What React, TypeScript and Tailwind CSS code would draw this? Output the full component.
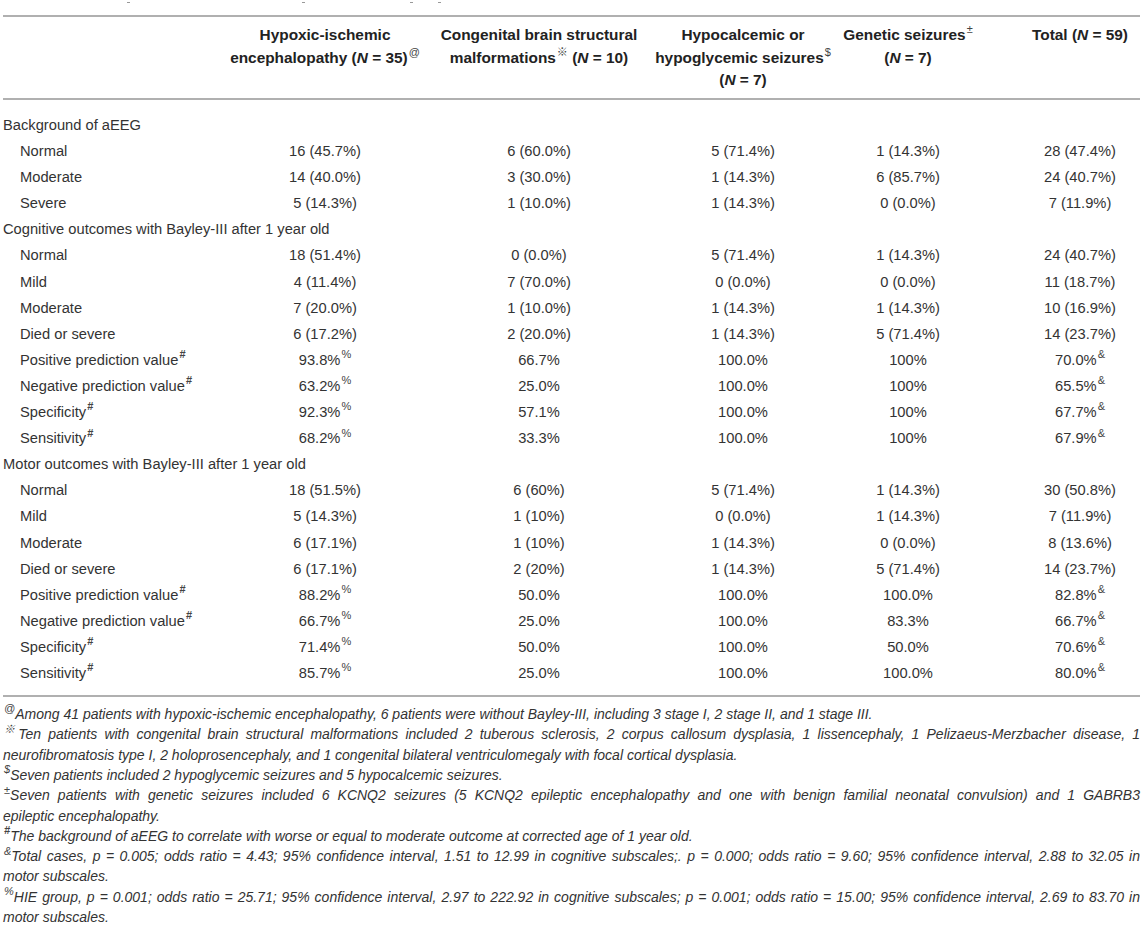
import React from "react";

type Cell = [string, string?];

const grid = "grid grid-cols-[213px_218px_210px_198px_132px_166px]";

const rows: { label: string; sup?: string; section?: boolean; values?: Cell[] }[] = [
  { label: "Background of aEEG", section: true },
  { label: "Normal", values: [["16 (45.7%)"], ["6 (60.0%)"], ["5 (71.4%)"], ["1 (14.3%)"], ["28 (47.4%)"]] },
  { label: "Moderate", values: [["14 (40.0%)"], ["3 (30.0%)"], ["1 (14.3%)"], ["6 (85.7%)"], ["24 (40.7%)"]] },
  { label: "Severe", values: [["5 (14.3%)"], ["1 (10.0%)"], ["1 (14.3%)"], ["0 (0.0%)"], ["7 (11.9%)"]] },
  { label: "Cognitive outcomes with Bayley-III after 1 year old", section: true },
  { label: "Normal", values: [["18 (51.4%)"], ["0 (0.0%)"], ["5 (71.4%)"], ["1 (14.3%)"], ["24 (40.7%)"]] },
  { label: "Mild", values: [["4 (11.4%)"], ["7 (70.0%)"], ["0 (0.0%)"], ["0 (0.0%)"], ["11 (18.7%)"]] },
  { label: "Moderate", values: [["7 (20.0%)"], ["1 (10.0%)"], ["1 (14.3%)"], ["1 (14.3%)"], ["10 (16.9%)"]] },
  { label: "Died or severe", values: [["6 (17.2%)"], ["2 (20.0%)"], ["1 (14.3%)"], ["5 (71.4%)"], ["14 (23.7%)"]] },
  { label: "Positive prediction value", sup: "#", values: [["93.8%", "%"], ["66.7%"], ["100.0%"], ["100%"], ["70.0%", "&"]] },
  { label: "Negative prediction value", sup: "#", values: [["63.2%", "%"], ["25.0%"], ["100.0%"], ["100%"], ["65.5%", "&"]] },
  { label: "Specificity", sup: "#", values: [["92.3%", "%"], ["57.1%"], ["100.0%"], ["100%"], ["67.7%", "&"]] },
  { label: "Sensitivity", sup: "#", values: [["68.2%", "%"], ["33.3%"], ["100.0%"], ["100%"], ["67.9%", "&"]] },
  { label: "Motor outcomes with Bayley-III after 1 year old", section: true },
  { label: "Normal", values: [["18 (51.5%)"], ["6 (60%)"], ["5 (71.4%)"], ["1 (14.3%)"], ["30 (50.8%)"]] },
  { label: "Mild", values: [["5 (14.3%)"], ["1 (10%)"], ["0 (0.0%)"], ["1 (14.3%)"], ["7 (11.9%)"]] },
  { label: "Moderate", values: [["6 (17.1%)"], ["1 (10%)"], ["1 (14.3%)"], ["0 (0.0%)"], ["8 (13.6%)"]] },
  { label: "Died or severe", values: [["6 (17.1%)"], ["2 (20%)"], ["1 (14.3%)"], ["5 (71.4%)"], ["14 (23.7%)"]] },
  { label: "Positive prediction value", sup: "#", values: [["88.2%", "%"], ["50.0%"], ["100.0%"], ["100.0%"], ["82.8%", "&"]] },
  { label: "Negative prediction value", sup: "#", values: [["66.7%", "%"], ["25.0%"], ["100.0%"], ["83.3%"], ["66.7%", "&"]] },
  { label: "Specificity", sup: "#", values: [["71.4%", "%"], ["50.0%"], ["100.0%"], ["50.0%"], ["70.6%", "&"]] },
  { label: "Sensitivity", sup: "#", values: [["85.7%", "%"], ["25.0%"], ["100.0%"], ["100.0%"], ["80.0%", "&"]] },
];

// each visual line of the notes; justified ones stretch to the full width
const notes: { sup?: string; text: string; justify?: boolean }[] = [
  { sup: "@", text: "Among 41 patients with hypoxic-ischemic encephalopathy, 6 patients were without Bayley-III, including 3 stage I, 2 stage II, and 1 stage III." },
  { sup: "※", text: "Ten patients with congenital brain structural malformations included 2 tuberous sclerosis, 2 corpus callosum dysplasia, 1 lissencephaly, 1 Pelizaeus-Merzbacher disease, 1", justify: true },
  { text: "neurofibromatosis type I, 2 holoprosencephaly, and 1 congenital bilateral ventriculomegaly with focal cortical dysplasia." },
  { sup: "$", text: "Seven patients included 2 hypoglycemic seizures and 5 hypocalcemic seizures." },
  { sup: "±", text: "Seven patients with genetic seizures included 6 KCNQ2 seizures (5 KCNQ2 epileptic encephalopathy and one with benign familial neonatal convulsion) and 1 GABRB3", justify: true },
  { text: "epileptic encephalopathy." },
  { sup: "#", text: "The background of aEEG to correlate with worse or equal to moderate outcome at corrected age of 1 year old." },
  { sup: "&", text: "Total cases, p = 0.005; odds ratio = 4.43; 95% confidence interval, 1.51 to 12.99 in cognitive subscales;. p = 0.000; odds ratio = 9.60; 95% confidence interval, 2.88 to 32.05 in", justify: true },
  { text: "motor subscales." },
  { sup: "%", text: "HIE group, p = 0.001; odds ratio = 25.71; 95% confidence interval, 2.97 to 222.92 in cognitive subscales; p = 0.001; odds ratio = 15.00; 95% confidence interval, 2.69 to 83.70 in", justify: true },
  { text: "motor subscales." },
];

function Sup({ children, bold }: { children: React.ReactNode; bold?: boolean }) {
  return (
    <sup className={`text-[11px] ml-[1px] top-[-0.6em] text-[#444] ${bold ? "font-bold" : "font-normal"}`}>
      {children}
    </sup>
  );
}

function N({ n }: { n: string }) {
  return (
    <>
      (<i>N</i> = {n})
    </>
  );
}

export default function App() {
  return (
    <div
      className="w-[1143px] h-[927px] bg-white text-[#333] overflow-hidden px-[3px]"
      style={{ fontFamily: '"Liberation Sans", "Noto Sans CJK JP", Arial, sans-serif' }}
    >
      {/* bits of the caption cut off above */}
      <div className="h-[15px] flex items-start pt-[2px]">
        <span className="w-[3px] h-[1px] bg-[#999] ml-[124px]" />
        <span className="w-[3px] h-[1px] bg-[#999] ml-[172px]" />
        <span className="w-[3px] h-[1px] bg-[#999] ml-[105px]" />
        <span className="w-[3px] h-[1px] bg-[#999] ml-[25px]" />
      </div>

      <div className={`${grid} border-t-2 border-b-2 border-[#b0b0b0] pt-[7px] pb-[7px] h-[85px] text-[15.4px] leading-[22.5px] font-bold text-[#222]`}>
        <div />
        <div className="flex flex-col items-center whitespace-nowrap">
          <span>Hypoxic-ischemic</span>
          <span>
            encephalopathy <N n="35" />
            <Sup>@</Sup>
          </span>
        </div>
        <div className="flex flex-col items-center whitespace-nowrap">
          <span>Congenital brain structural</span>
          <span>
            malformations<Sup>※</Sup> <N n="10" />
          </span>
        </div>
        <div className="flex flex-col items-center whitespace-nowrap">
          <span>Hypocalcemic or</span>
          <span>
            hypoglycemic seizures<Sup>$</Sup>
          </span>
          <span>
            <N n="7" />
          </span>
        </div>
        <div className="flex flex-col items-center whitespace-nowrap">
          <span>
            Genetic seizures<Sup>±</Sup>
          </span>
          <span>
            <N n="7" />
          </span>
        </div>
        <div className="flex flex-col items-center whitespace-nowrap pl-[46px]">
          <span>
            Total <N n="59" />
          </span>
        </div>
      </div>

      <div className="pt-[12px] pb-[9px] border-b-2 border-[#b0b0b0] text-[14.7px]">
        {rows.map((r, i) => (
          <div key={i} className={`${grid} h-[26.1px] items-center whitespace-nowrap`}>
            <div className={r.section ? "col-span-6" : "pl-[17px]"}>
              {r.label}
              {r.sup && <Sup bold>{r.sup}</Sup>}
            </div>
            {r.values?.map(([v, s], j) => (
              <div key={j} className={`text-center ${j === 4 ? "pl-[46px]" : ""}`}>
                {v}
                {s && <Sup>{s}</Sup>}
              </div>
            ))}
          </div>
        ))}
      </div>

      <div className="pt-[7px] text-[14px] leading-[20.3px] italic text-[#333]">
        {notes.map((n, i) => (
          <div
            key={i}
            className={n.justify ? "text-justify [text-align-last:justify]" : "whitespace-nowrap"}
          >
            {n.sup && <Sup bold={n.sup === "#"}>{n.sup}</Sup>}
            {n.text}
          </div>
        ))}
      </div>
    </div>
  );
}
